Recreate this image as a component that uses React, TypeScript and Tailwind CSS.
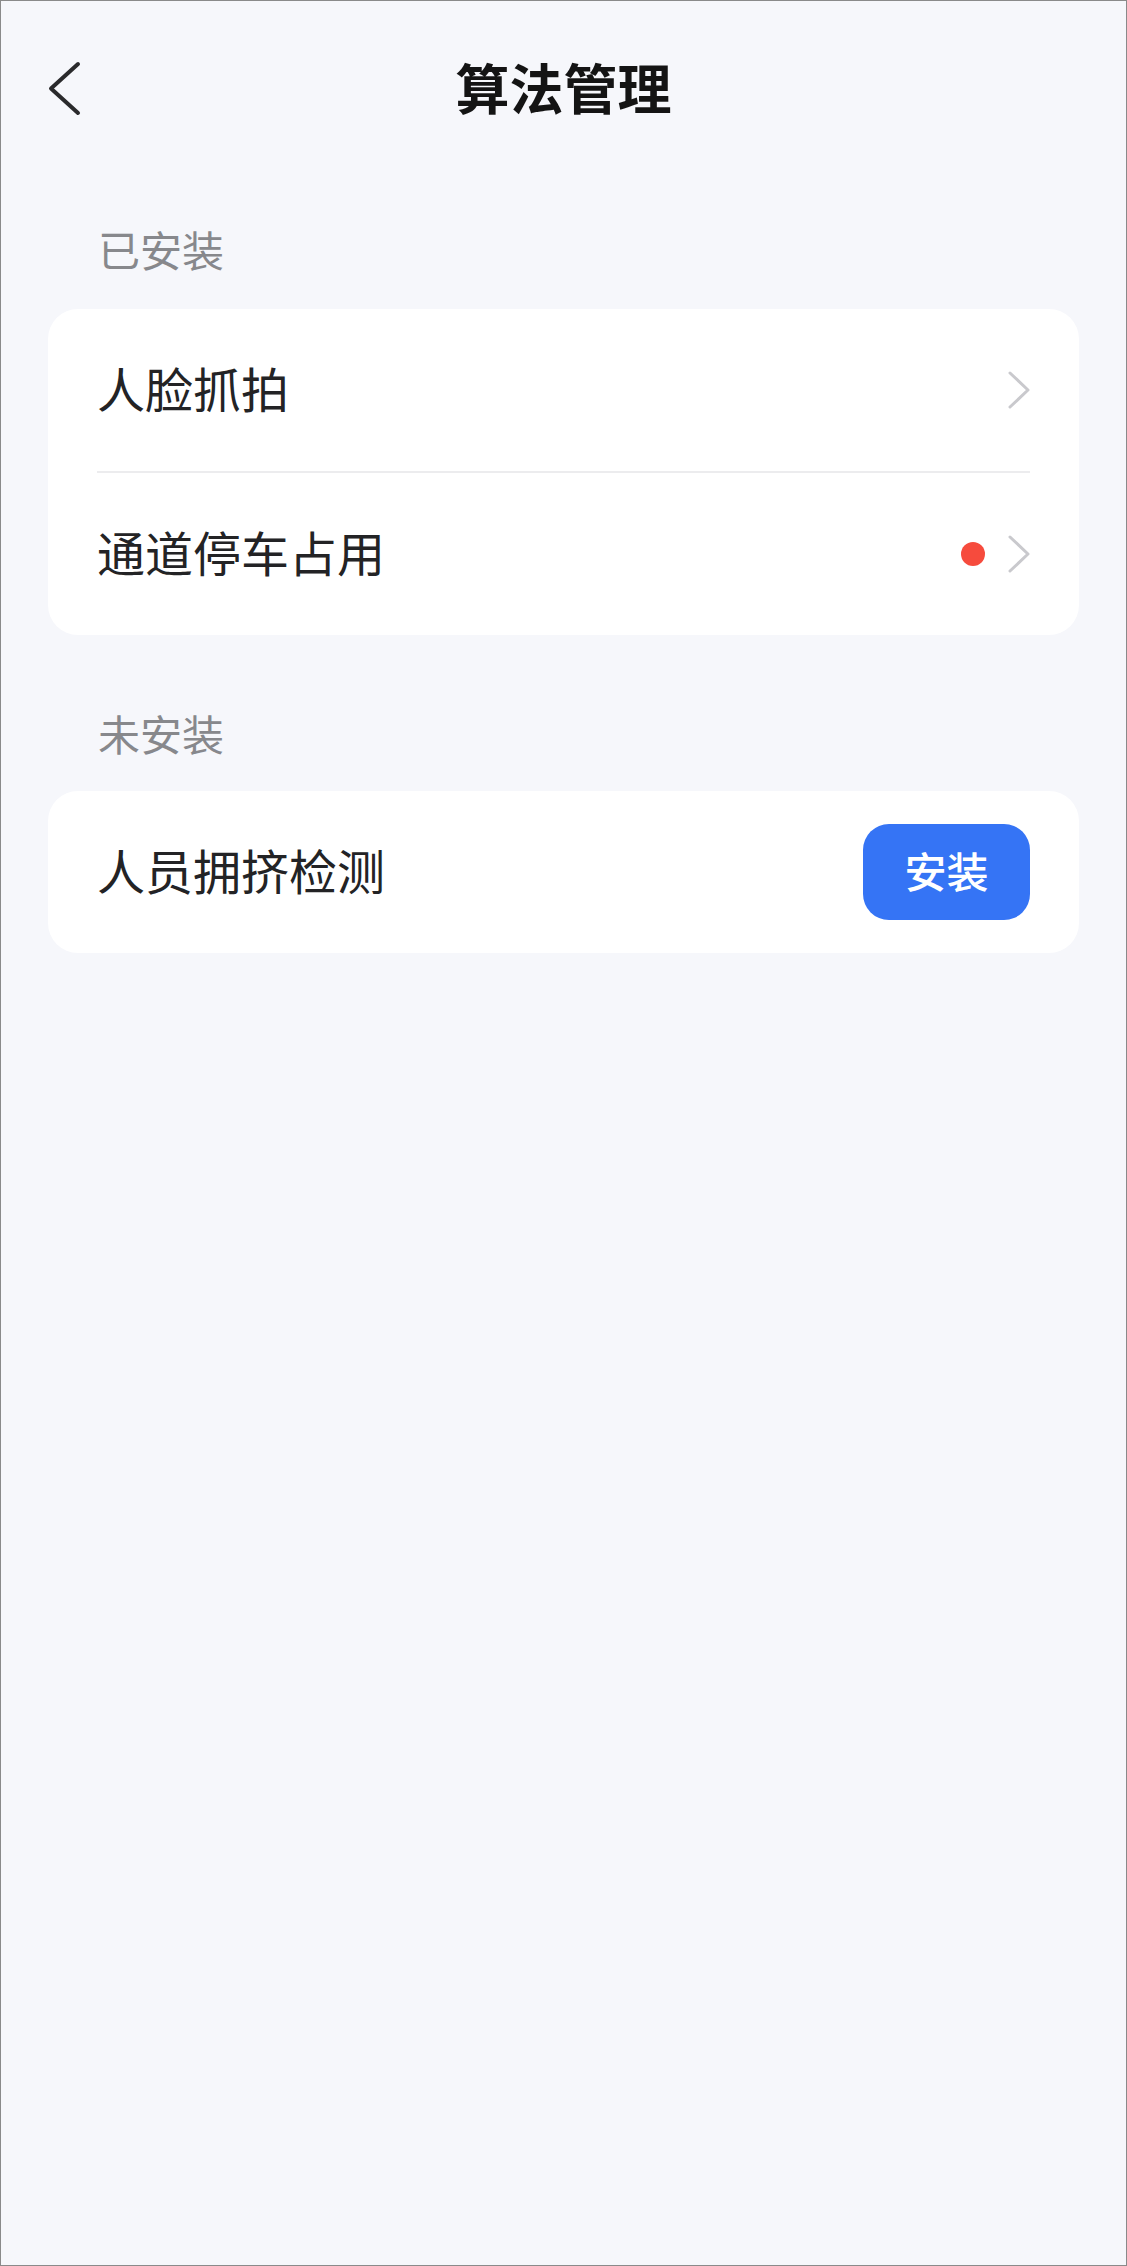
import React from 'react';

const FONT = { fontFamily: '"Noto Sans CJK SC", "Noto Sans", sans-serif' };

type Item = { name: string; badge?: boolean };

const INSTALLED: Item[] = [
  { name: '人脸抓拍' },
  { name: '通道停车占用', badge: true },
];

const NOT_INSTALLED: Item[] = [{ name: '人员拥挤检测' }];

const BackIcon = () => (
  <svg width="34" height="56" viewBox="0 0 34 56" fill="none">
    <path d="M30 3 L3 27.5 L30 52" stroke="#2a2a2c" strokeWidth="4" strokeLinecap="round" strokeLinejoin="round" />
  </svg>
);

const ChevronRight = () => (
  <svg width="22" height="38" viewBox="0 0 22 38" fill="none">
    <path d="M2 2 L20 19 L2 36" stroke="#c9c9cd" strokeWidth="3" strokeLinecap="round" strokeLinejoin="round" />
  </svg>
);

const SectionLabel: React.FC<{ text: string; className: string }> = ({ text, className }) => (
  <div className={`px-[97px] text-[42px] leading-[42px] text-[#87888c] ${className}`}>{text}</div>
);

const App: React.FC = () => {
  return (
    <div className="w-[1127px] h-[2266px] border border-[#8a8a8a] bg-[#f6f7fb]" style={FONT}>
      {/* Header */}
      <div className="relative h-[176px] flex items-center justify-center pb-[6px]">
        <button className="absolute left-[47px] top-[60px]">
          <BackIcon />
        </button>
        <h1 className="text-[54px] font-bold text-[#141414]">算法管理</h1>
      </div>

      <SectionLabel text="已安装" className="pt-[51px] pb-[39px]" />
      <div className="mx-[47px] bg-white rounded-[30px] px-[49px]">
        {INSTALLED.map((item, i) => (
          <div key={item.name}>
            {i > 0 && <div className="h-[2px] bg-[#ececee]" />}
            <div className="h-[162px] flex items-center justify-between">
              <span className="text-[48px] text-[#232325] -mt-[6px]">{item.name}</span>
              <div className="flex items-center gap-[23px]">
                {item.badge && <span className="w-[24px] h-[24px] rounded-full bg-[#f64b3d]" />}
                <ChevronRight />
              </div>
            </div>
          </div>
        ))}
      </div>

      <SectionLabel text="未安装" className="pt-[77px] pb-[37px]" />
      <div className="mx-[47px] bg-white rounded-[30px] px-[49px]">
        {NOT_INSTALLED.map(item => (
          <div key={item.name} className="h-[162px] flex items-center justify-between">
            <span className="text-[48px] text-[#232325] -mt-[6px]">{item.name}</span>
            <button className="w-[167px] h-[96px] pb-[6px] rounded-[26px] bg-[#3574f5] text-white text-[42px] font-medium">
              安装
            </button>
          </div>
        ))}
      </div>
    </div>
  );
};

export default App;
